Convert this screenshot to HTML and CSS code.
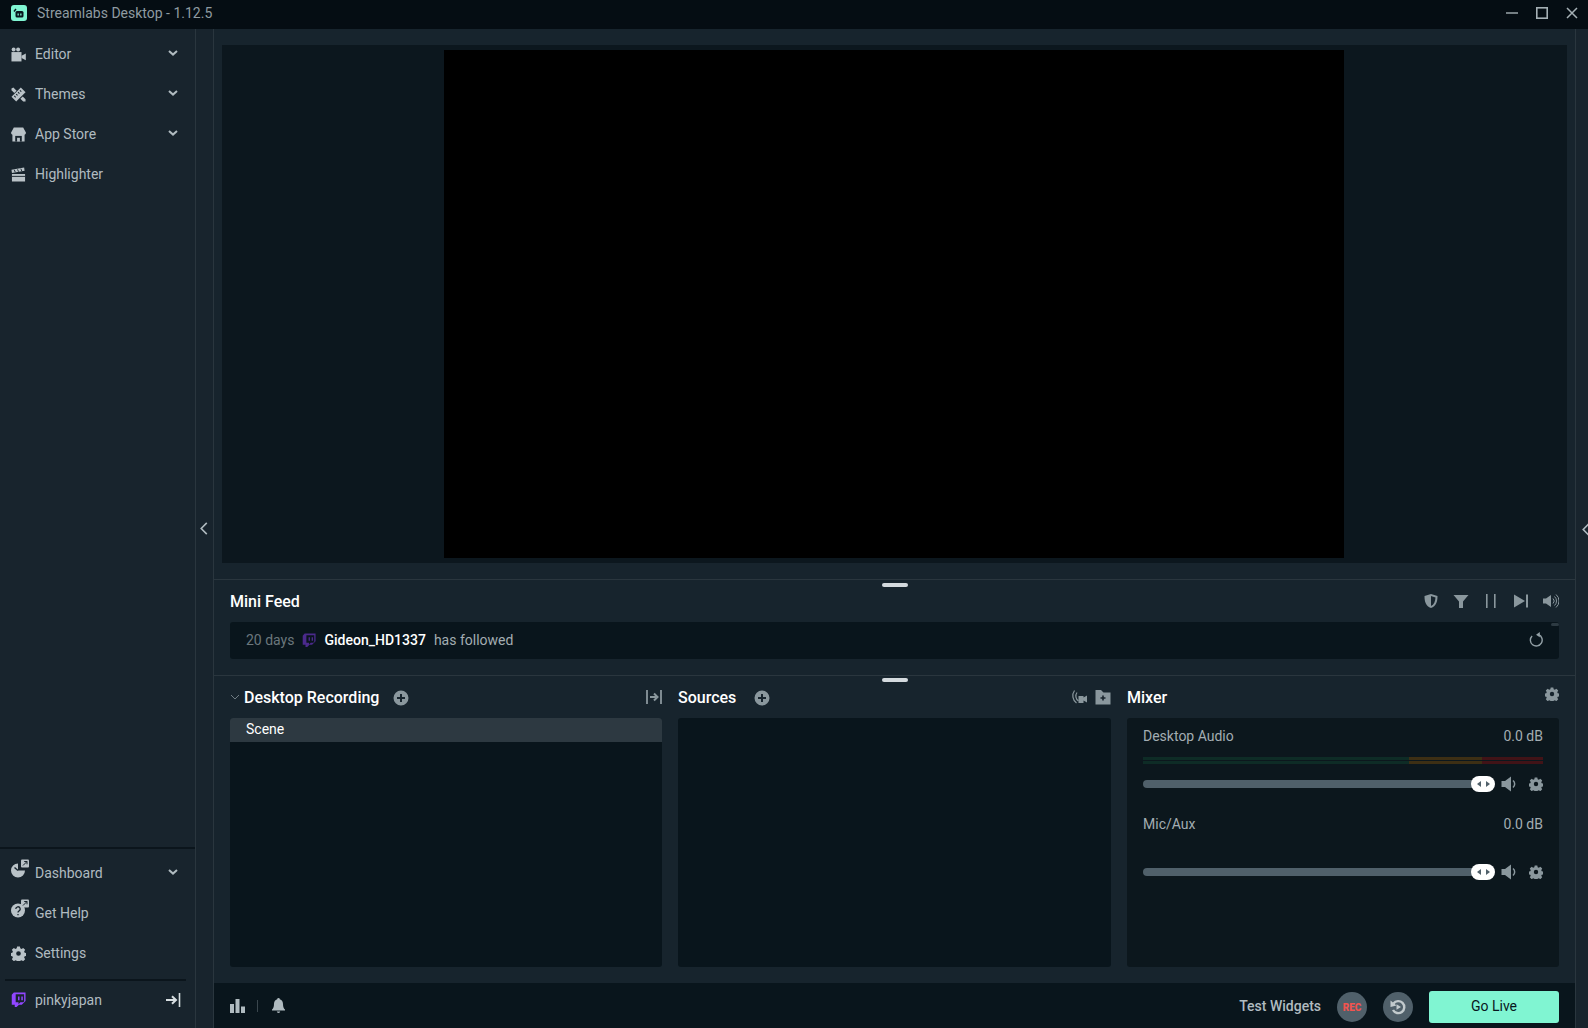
FILE: index.html
```html
<!DOCTYPE HTML>
<html lang="en">
  <head>
    <title>Streamlabs Desktop</title>
    <link rel="stylesheet" href="styles.css">
  </head>
  <body>
    <div class="TitleBar">
      <svg class="AppLogo" viewBox="0 0 16 16"><rect width="16" height="16" rx="3" fill="#80f5d2"/><path d="M3 6.5 5 4" stroke="#09161d" stroke-width="1.4" fill="none"/><rect x="4.5" y="6" width="8" height="6.5" rx="1.5" fill="#09161d"/><rect x="6.5" y="8.5" width="1.3" height="2" fill="#80f5d2"/><rect x="9.2" y="8.5" width="1.3" height="2" fill="#80f5d2"/></svg>
      <span class="AppTitle">Streamlabs Desktop - 1.12.5</span>
      <div class="WindowBtns">
        <svg class="WinIcon" viewBox="0 0 12 12"><path d="M0 6h12" stroke="#a5b0b5" stroke-width="1.4"/></svg>
        <svg class="WinIcon" viewBox="0 0 12 12"><rect x=".8" y=".8" width="10.4" height="10.4" fill="none" stroke="#a5b0b5" stroke-width="1.6"/></svg>
        <svg class="WinIcon" viewBox="0 0 12 12"><path d="M1 1l10 10M11 1 1 11" stroke="#a5b0b5" stroke-width="1.5"/></svg>
      </div>
    </div>

    <div class="Body">
      <div class="SideNav">
        <div class="NavTop">
          <div class="NavItem">
            <svg class="NavIcon" viewBox="0 0 16 16"><circle cx="2.8" cy="2.6" r="2.1"/><circle cx="7.6" cy="2.6" r="2.1"/><rect x="0.5" y="5.4" width="10.7" height="10"/><path d="M11.2 9.2 15.8 7v7l-4.600-2.200z"/></svg>
            <span class="NavLabel">Editor</span>
            <svg class="Chevron" viewBox="0 0 10 6"><path d="M1 1l4 3.6L9 1" /></svg>
          </div>
          <div class="NavItem">
            <svg class="NavIcon" viewBox="0 0 16 16"><path d="M.5 10.500 10.500 .5l5 5-10 10z"/><path d="M9.500 3.500 11 5M7.500 5.500 9 7M5.500 7.500 7 9M3.500 9.500 5 11" stroke="#18242d" stroke-width="1.100"/><path d="M.5 1.500 2.500 .5 6 4 3.500 6.500 .5 3.500zM10 12.500l2.500-2.500 3 3v2.500h-2.500z"/></svg>
            <span class="NavLabel">Themes</span>
            <svg class="Chevron" viewBox="0 0 10 6"><path d="M1 1l4 3.6L9 1" /></svg>
          </div>
          <div class="NavItem">
            <svg class="NavIcon" viewBox="0 0 16 16"><path d="M3 .5h10L16 6.200a2.300 2.300 0 0 1-1.500 2V15.500h-13V8.200a2.300 2.300 0 0 1-1.500-2z"/><rect x="4.500" y="9.500" width="7" height="6" fill="#18242d"/><rect x="6.500" y="11.500" width="3" height="4"/></svg>
            <span class="NavLabel">App Store</span>
            <svg class="Chevron" viewBox="0 0 10 6"><path d="M1 1l4 3.6L9 1" /></svg>
          </div>
          <div class="NavItem">
            <svg class="NavIcon" viewBox="0 0 16 16"><path d="M1 7.500h14V15.500H1zM1 6.500.5 3 14 .5l.5 3.500z"/><path d="M3.500 3 4.500 5.500M7 2.500 8 5M10.500 1.800 11.500 4.400M1 10h14" stroke="#18242d" stroke-width="1"/></svg>
            <span class="NavLabel">Highlighter</span>
          </div>
        </div>
        <div class="NavBottom">
          <div class="NavItem">
            <svg class="NavIcon NavIconWide" viewBox="0 0 20 20"><path d="M8 4.500a7 7 0 1 0 7 7H8z"/><rect x="11" y="0.500" width="8" height="8" rx="1"/><path d="M13 6.500l4-4M14.200 2.500H17v2.800" stroke="#18242d" stroke-width="1" fill="none"/><path d="M4.500 8.500 8 11.500" stroke="#18242d" stroke-width="1.500"/></svg>
            <span class="NavLabel">Dashboard</span>
            <svg class="Chevron" viewBox="0 0 10 6"><path d="M1 1l4 3.6L9 1" /></svg>
          </div>
          <div class="NavItem">
            <svg class="NavIcon NavIconWide" viewBox="0 0 20 20"><circle cx="8" cy="11.500" r="7"/><rect x="11" y="0.500" width="8" height="8" rx="1"/><path d="M13 6.500l4-4M14.200 2.500H17v2.800" stroke="#18242d" stroke-width="1" fill="none"/><path d="M5.800 10a2.200 2.200 0 1 1 3.300 1.900c-.8.400-1.100.8-1.100 1.600M8 15v1.200" stroke="#18242d" stroke-width="1.300" fill="none"/></svg>
            <span class="NavLabel">Get Help</span>
          </div>
          <div class="NavItem">
            <svg class="NavIcon" viewBox="0 0 16 16"><use href="#gear"/></svg>
            <span class="NavLabel">Settings</span>
          </div>
          <div class="UserRow">
            <svg class="NavIcon" viewBox="0 0 16 16"><use href="#twitch" fill="#9146ff"/></svg>
            <span class="NavLabel">pinkyjapan</span>
            <svg class="LogoutIcon" viewBox="0 0 15 14"><path d="M0 7h9" stroke-width="2"/><path d="M6 3.200 10 7l-4 3.800" stroke-width="2" fill="none"/><path d="M13.500 0v14" stroke-width="1.600"/></svg>
          </div>
        </div>
      </div>

      <div class="SideStrip">
        <svg class="StripArrow" viewBox="0 0 8 14"><path d="M7 1 1 7l6 6"/></svg>
      </div>

      <div class="Main">
        <div class="DisplayWrap">
          <div class="Display"><div class="Canvas"></div></div>
        </div>

        <div class="FeedSection">
          <div class="Handle"></div>
          <div class="PanelHead">
            <h3 class="Heading">Mini Feed</h3>
            <div class="HeadIcons">
              <svg class="SmallIcon" viewBox="0 0 16 16"><path d="M8 1 14.500 3c0 6-1.500 10-6.500 12C3 13 1.500 9 1.500 3zM8 3v10c3-1.500 4.300-4.500 4.500-8.600z" fill-rule="evenodd"/></svg>
              <svg class="SmallIcon" viewBox="0 0 16 16"><path d="M.5 2h15L10 8.500V15H6V8.500z"/></svg>
              <svg class="SmallIcon" viewBox="0 0 16 16"><rect x="3" y="1" width="1.600" height="14"/><rect x="11" y="1" width="1.600" height="14"/></svg>
              <svg class="SmallIcon" viewBox="0 0 16 16"><path d="M1 1.500 12 8 1 14.500z"/><rect x="13" y="1.500" width="2" height="13"/></svg>
              <svg class="SmallIcon" viewBox="0 0 16 16"><path d="M0 5.500h3L8 2v12L3 10.500H0z"/><path d="M10 5.500a3.500 3.500 0 0 1 0 5M11.500 3.500a6 6 0 0 1 0 9M13 1.500a8.500 8.500 0 0 1 0 13" fill="none" stroke="#8a979d" stroke-width="1"/></svg>
            </div>
          </div>
          <div class="FeedBox">
            <span class="FeedTime">20 days</span>
            <svg class="FeedTwitch" viewBox="0 0 16 16"><use href="#twitch" fill="#4b2a8c"/></svg>
            <span class="FeedUser">Gideon_HD1337</span>
            <span class="FeedText">has followed</span>
            <svg class="RepeatIcon" viewBox="0 0 16 16"><path d="M3.300 4.200a6.300 6.300 0 1 0 7-1.300" fill="none" stroke="#93a0a6" stroke-width="1.500"/><path d="M11.500 0v5.600L7.500 2.800z" fill="#93a0a6"/></svg>
            <div class="ScrollNub"></div>
          </div>
        </div>

        <div class="Docks">
          <div class="Handle"></div>
          <div class="Dock">
            <div class="PanelHead">
              <svg class="Collapse" viewBox="0 0 10 6"><path d="M1 1l4 4 4-4"/></svg>
              <h3 class="Heading">Desktop Recording</h3>
              <svg class="AddIcon" viewBox="0 0 16 16"><use href="#add"/></svg>
              <svg class="SmallIcon PushEnd" viewBox="0 0 16 16"><path d="M1 1v14M15 1v14" stroke="#8a979d" stroke-width="1.800"/><path d="M4 8h6" stroke="#8a979d" stroke-width="2"/><path d="M8 4.500 11.500 8 8 11.500" fill="none" stroke="#8a979d" stroke-width="2"/></svg>
            </div>
            <div class="DockBody">
              <div class="SceneRow">Scene</div>
            </div>
          </div>
          <div class="Dock">
            <div class="PanelHead">
              <h3 class="Heading">Sources</h3>
              <svg class="AddIcon AddIconFar" viewBox="0 0 16 16"><use href="#add"/></svg>
              <svg class="SmallIcon PushEnd" viewBox="0 0 16 16"><path d="M3.500 1.500a9 9 0 0 0 2 12.500M6 3.500a6 6 0 0 0 1.500 8.500" fill="none" stroke="#8a979d" stroke-width="1.200"/><path d="M7.500 7h5v1.500L16 6.500v7l-3.500-2V14h-5z"/></svg>
              <svg class="SmallIcon" viewBox="0 0 16 16"><path d="M.5 1h5.500l2.500 2.500h7V15.500H.5z"/><path d="M8 6.500v5M5.500 9h5" stroke="#18242d" stroke-width="1.600"/></svg>
            </div>
            <div class="DockBody"></div>
          </div>
          <div class="Dock">
            <div class="PanelHead">
              <h3 class="Heading">Mixer</h3>
              <svg class="GearIcon MixerGear" viewBox="0 0 16 16"><use href="#gear"/></svg>
            </div>
            <div class="DockBody MixerBody">
              <div class="MixerItem">
                <div class="MixerLine"><span>Desktop Audio</span><span>0.0 dB</span></div>
                <div class="Meter">
                  <div class="MeterBar"><i class="MeterGreen"></i><i class="MeterAmber"></i><i class="MeterRed"></i></div>
                  <div class="MeterBar"><i class="MeterGreen"></i><i class="MeterAmber"></i><i class="MeterRed"></i></div>
                </div>
                <div class="FaderRow">
                  <div class="Fader"><div class="Thumb"><i class="ThumbL"></i><i class="ThumbR"></i></div></div>
                  <svg class="SmallIcon" viewBox="0 0 16 16"><path d="M.5 5h3.500L10 .5v15L4 11H.5z"/><path d="M12 4.500a4.500 4.500 0 0 1 0 7" fill="none" stroke="#8a979d" stroke-width="1.500"/></svg>
                  <svg class="GearIcon" viewBox="0 0 16 16"><use href="#gear"/></svg>
                </div>
              </div>
              <div class="MixerItem">
                <div class="MixerLine"><span>Mic/Aux</span><span>0.0 dB</span></div>
                <div class="Meter MeterEmpty"></div>
                <div class="FaderRow">
                  <div class="Fader"><div class="Thumb"><i class="ThumbL"></i><i class="ThumbR"></i></div></div>
                  <svg class="SmallIcon" viewBox="0 0 16 16"><path d="M.5 5h3.500L10 .5v15L4 11H.5z"/><path d="M12 4.500a4.500 4.500 0 0 1 0 7" fill="none" stroke="#8a979d" stroke-width="1.500"/></svg>
                  <svg class="GearIcon" viewBox="0 0 16 16"><use href="#gear"/></svg>
                </div>
              </div>
            </div>
          </div>
        </div>

        <div class="Footer">
          <svg class="FootIcon" viewBox="0 0 15 15"><rect x="0" y="6" width="4" height="9"/><rect x="5.500" y="1" width="4" height="14"/><rect x="11" y="8.500" width="4" height="6.500"/></svg>
          <div class="FootSep"></div>
          <svg class="FootIcon" viewBox="0 0 15 15"><path d="M7.500 0a1.300 1.300 0 0 1 1.300 1.300C11 2 12 3.800 12 6c0 3 .8 4.500 2 5.500v1H1v-1C2.200 10.500 3 9 3 6c0-2.200 1-4 3.200-4.700A1.300 1.300 0 0 1 7.500 0z"/><path d="M5.800 13.500h3.400a1.700 1.500 0 0 1-3.400 0z"/></svg>
          <span class="TestWidgets">Test Widgets</span>
          <div class="RoundBtn RecBtn">REC</div>
          <div class="RoundBtn">
            <svg class="ReplayIcon" viewBox="0 0 16 16"><path d="M3.500 4.500A6 6 0 1 1 3 11" fill="none" stroke="#c2cacd" stroke-width="2.400"/><path d="M.5 1.500 6.500 6.500.5 8z" fill="#c2cacd"/><path d="M6.500 5.200 11 8l-4.500 2.800z" fill="#c2cacd"/></svg>
          </div>
          <div class="GoLive">Go Live</div>
        </div>
      </div>

      <div class="RightStrip">
        <svg class="StripArrow" viewBox="0 0 8 14"><path d="M7 1 1 7l6 6"/></svg>
      </div>
    </div>

    <svg class="IconDefs" viewBox="0 0 16 16">
      <defs>
        <path id="gear" fill-rule="evenodd" d="M6.500.5h3l.4 2 1.300.6 1.800-1.100 2.100 2.100-1.100 1.800.6 1.300 2 .4v3l-2 .4-.6 1.300 1.100 1.800-2.100 2.100-1.800-1.100-1.300.6-.4 2h-3l-.4-2-1.300-.6-1.800 1.100-2.100-2.100 1.100-1.800-.6-1.300-2-.4v-3l2-.4.6-1.300-1.100-1.800 2.100-2.100 1.800 1.100 1.300-.6zM8 5.500a2.500 2.500 0 1 0 0 5 2.500 2.500 0 0 0 0-5z"/>
        <path id="twitch" fill-rule="evenodd" d="M3 .5h12.500v9L11.500 13.500H8.500L6 16H4v-2.500H.8V3zM5 2.500v8.500h3v2l2-2h3l1-1V2.500zM7.500 4.800h1.600v4H7.500zM11 4.800h1.600v4H11z"/>
        <path id="add" fill-rule="evenodd" d="M8 .5a7.500 7.500 0 1 1 0 15 7.500 7.500 0 0 1 0-15zM7 4v3H4v2h3v3h2V9h3V7H9V4z"/>
      </defs>
    </svg>
  </body>
</html>
```

FILE: styles.css
```css
* {
  margin: 0;
  padding: 0;
  box-sizing: border-box;
}

html, body {
  height: 100%;
  overflow: hidden;
}

body {
  display: flex;
  flex-direction: column;
  background: #17242d;
  color: #bdc6cb;
  font-family: Roboto, "Liberation Sans", sans-serif;
  font-size: 14px;
}

.IconDefs {
  position: absolute;
  width: 0;
  height: 0;
}

/* title bar */
.TitleBar {
  display: flex;
  align-items: center;
  flex: 0 0 29px;
  padding-left: 11px;
  padding-bottom: 3px;
  background: #050d13;
}

.AppLogo {
  width: 16px;
  height: 16px;
  margin-right: 10px;
}

.AppTitle {
  color: #8f9ba1;
  font-size: 14px;
}

.WindowBtns {
  display: flex;
  gap: 18px;
  margin-left: auto;
  padding-right: 10px;
}

.WinIcon {
  width: 12px;
  height: 12px;
}

.Body {
  display: flex;
  flex: 1;
  min-height: 0;
}

/* left nav */
.SideNav {
  display: flex;
  flex-direction: column;
  justify-content: space-between;
  width: 195px;
  background: #18242d;
}

.NavTop {
  display: flex;
  flex-direction: column;
  padding-top: 5px;
}

.NavBottom {
  display: flex;
  flex-direction: column;
  border-top: 2px solid #0b151c;
  padding-top: 4px;
}

.NavItem {
  display: flex;
  align-items: center;
  height: 40px;
  padding: 0 17px 0 11px;
}

.NavIcon {
  flex: none;
  width: 15px;
  height: 15px;
  margin-right: 9px;
  fill: #b9c2c7;
}

.NavIconWide {
  width: 20px;
  height: 20px;
  margin: -8px 5px 0 -1px;
}

.NavLabel {
  flex: 1;
  color: #b0bbc0;
  font-size: 14px;
}

.Chevron {
  flex: none;
  width: 10px;
  height: 6px;
  margin-top: -2px;
  fill: none;
  stroke: #b0bbc0;
  stroke-width: 2;
}

.UserRow {
  display: flex;
  align-items: center;
  height: 49px;
  margin: 6px 9px 0 5px;
  padding: 0 5px 10px 6px;
  border-top: 2px solid #0b151c;
}

.LogoutIcon {
  flex: none;
  width: 15px;
  height: 14px;
  stroke: #d8dfe2;
}

/* collapse strips */
.SideStrip {
  display: flex;
  align-items: center;
  justify-content: center;
  width: 19px;
  padding-right: 2px;
  border-left: 1px solid #2a363e;
  border-right: 1px solid #2a363e;
  background: #18242d;
}

.RightStrip {
  display: flex;
  align-items: center;
  justify-content: flex-start;
  width: 13px;
  padding-top: 2px;
  border-left: 1px solid #2a363e;
  overflow: hidden;
  background: #18242d;
}

.RightStrip .StripArrow {
  margin-left: 6px;
}

.StripArrow {
  flex: none;
  width: 8px;
  height: 13px;
  fill: none;
  stroke: #b0bbc0;
  stroke-width: 1.700;
}

/* main column */
.Main {
  display: flex;
  flex: 1;
  flex-direction: column;
  min-width: 0;
}

.DisplayWrap {
  flex: 1;
  min-height: 0;
  padding: 16px 8px 16px 8px;
}

.Display {
  display: flex;
  justify-content: center;
  height: 100%;
  padding: 5px 0;
  background: #0c171e;
}

.Canvas {
  width: 900px;
  margin-right: 2px;
  background: #000;
}

.Handle {
  position: absolute;
  top: 3px;
  left: 50%;
  width: 26px;
  height: 4px;
  margin-left: -13px;
  border-radius: 2px;
  background: #d4dade;
}

.Docks .Handle {
  top: 2px;
}

.FeedSection {
  position: relative;
  flex: none;
  height: 96px;
  padding: 0 16px;
  border-top: 1px solid #2a363e;
}

.PanelHead {
  display: flex;
  align-items: center;
  height: 42px;
}

.Heading {
  color: #fff;
  font-size: 16px;
  font-weight: 500;
}

.HeadIcons {
  display: flex;
  gap: 14px;
  margin-left: auto;
}

.SmallIcon {
  flex: none;
  width: 16px;
  height: 16px;
  fill: #8a979d;
}

.GearIcon {
  flex: none;
  width: 14px;
  height: 14px;
  fill: #8a979d;
}

.PushEnd {
  margin-left: auto;
}

.Dock .PanelHead .SmallIcon + .SmallIcon {
  margin-left: 8px;
}

.FeedBox {
  position: relative;
  display: flex;
  align-items: center;
  height: 37px;
  padding: 0 15px 2px 16px;
  border-radius: 3px;
  background: #09151c;
}

.FeedTime {
  color: #6b777d;
}

.FeedTwitch {
  width: 14px;
  height: 14px;
  margin: 0 8px;
}

.FeedUser {
  margin-right: 8px;
  color: #fff;
  font-weight: 500;
}

.FeedText {
  color: #a3adb2;
}

.RepeatIcon {
  width: 15px;
  height: 15px;
  margin-left: auto;
}

.ScrollNub {
  position: absolute;
  top: 1px;
  right: 0;
  width: 8px;
  height: 3px;
  border-radius: 2px;
  background: #2d3a42;
}

/* bottom docks */
.Docks {
  position: relative;
  display: grid;
  flex: none;
  grid-template-columns: 432px 433px 432px;
  column-gap: 16px;
  height: 308px;
  padding: 0 16px;
  border-top: 1px solid #2a363e;
}

.Dock {
  display: flex;
  flex-direction: column;
}

.Collapse {
  width: 10px;
  height: 6px;
  margin-right: 4px;
  fill: none;
  stroke: #6f7c83;
  stroke-width: 1;
}

.AddIcon {
  width: 16px;
  height: 16px;
  margin: 1px 0 0 14px;
  fill: #8a979d;
}

.AddIconFar {
  margin-left: 18px;
}

.DockBody {
  height: 249px;
  border-radius: 3px;
  background: #09151c;
}

.SceneRow {
  height: 24px;
  padding-left: 16px;
  border-radius: 3px 3px 0 0;
  background: #2d3941;
  color: #fff;
  line-height: 23px;
}

.MixerBody {
  padding: 0 16px;
  background: #0c171d;
}

.MixerGear {
  margin: -6px 0 0 auto;
}

.MixerItem {
  height: 88px;
}

.MixerLine {
  display: flex;
  justify-content: space-between;
  padding-top: 10px;
  color: #a3adb2;
  line-height: 16px;
}

.Meter {
  display: flex;
  flex-direction: column;
  gap: 1px;
  height: 8px;
  margin-top: 13px;
}

.MeterBar {
  display: flex;
  height: 3px;
}

.MeterGreen {
  width: 66.500%;
  background: #0e2c26;
}

.MeterAmber {
  width: 18.300%;
  background: #3d2f14;
}

.MeterRed {
  flex: 1;
  background: #411317;
}

.FaderRow {
  display: flex;
  align-items: center;
  gap: 12px;
  margin-top: 11px;
}

.Fader {
  position: relative;
  flex: 1;
  height: 8px;
  margin-right: -4px;
  border-radius: 4px;
  background: #50606a;
}

.Thumb {
  position: absolute;
  top: -4px;
  right: -2px;
  display: flex;
  align-items: center;
  justify-content: center;
  gap: 5px;
  width: 24px;
  height: 16px;
  border-radius: 8px;
  background: #fff;
}

.ThumbL {
  border: 3px solid transparent;
  border-left-width: 0;
  border-right: 4px solid #50606a;
}

.ThumbR {
  border: 3px solid transparent;
  border-right-width: 0;
  border-left: 4px solid #50606a;
}

/* footer */
.Footer {
  display: flex;
  flex: none;
  align-items: center;
  height: 45px;
  padding: 3px 16px 0;
  background: #09151c;
}

.FootIcon {
  width: 15px;
  height: 15px;
  margin-bottom: 3px;
  fill: #b0bbc0;
}

.FootSep {
  width: 1px;
  height: 12px;
  margin: 0 13px 2px 12px;
  background: #3a464d;
}

.TestWidgets {
  margin: 0 0 2px auto;
  color: #b0bbc0;
  font-weight: 500;
}

.RoundBtn {
  display: flex;
  align-items: center;
  justify-content: center;
  width: 30px;
  height: 30px;
  margin-left: 16px;
  border-radius: 50%;
  background: #50606a;
}

.RecBtn {
  color: #f1544f;
  font-size: 10px;
  font-weight: 900;
}

.ReplayIcon {
  width: 16px;
  height: 16px;
}

.GoLive {
  width: 130px;
  height: 32px;
  margin-left: 16px;
  border-radius: 3px;
  background: #80f5d2;
  color: #09161d;
  line-height: 30px;
  text-align: center;
}
```
